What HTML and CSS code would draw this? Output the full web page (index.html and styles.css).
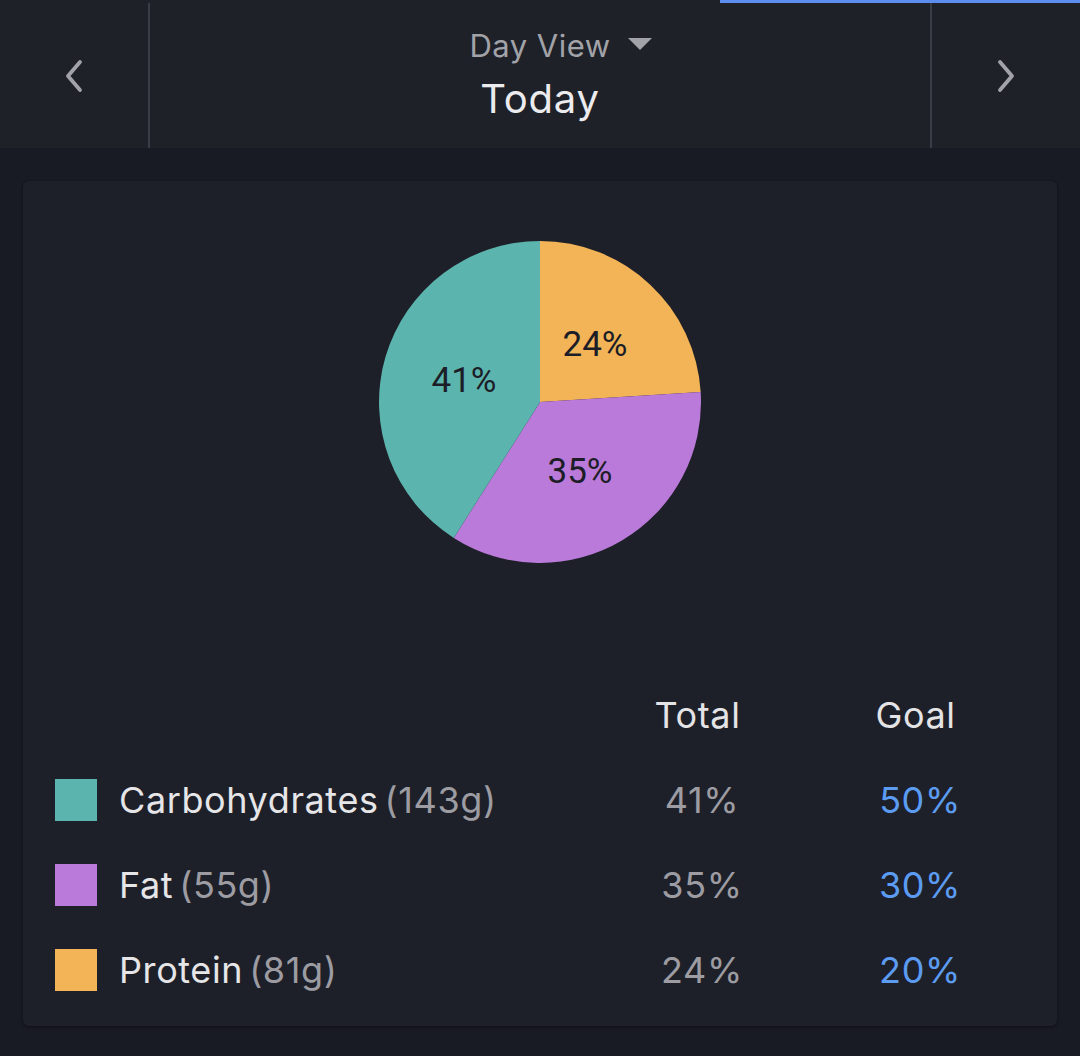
FILE: index.html
```html
<!DOCTYPE html>
<html lang="en">
<head>
    <meta charset="UTF-8">
    <meta name="viewport" content="width=device-width, initial-scale=1.0">
    <title>Macros - Day View</title>
    <link rel="stylesheet" href="styles.css">
</head>
<body>

    <header class="topbar">
        <div class="tab-strip">
            <div class="tab-indicator"></div>
        </div>
        <div class="date-nav">
            <button class="nav-btn" aria-label="Previous day">
                <svg width="22" height="34" viewBox="0 0 22 34">
                    <path d="M17 3 L5 17 L17 31" fill="none" stroke="#a2a3a8" stroke-width="3.8" stroke-linecap="round" stroke-linejoin="round"/>
                </svg>
            </button>
            <div class="date-title">
                <div class="view-select">
                    <span>Day View</span>
                    <svg class="caret" width="24" height="12" viewBox="0 0 24 12">
                        <path d="M0 0 H24 L12 12 Z" fill="#a2a3a8"/>
                    </svg>
                </div>
                <div class="day-label">Today</div>
            </div>
            <button class="nav-btn" aria-label="Next day">
                <svg width="22" height="34" viewBox="0 0 22 34">
                    <path d="M5 3 L17 17 L5 31" fill="none" stroke="#a2a3a8" stroke-width="3.8" stroke-linecap="round" stroke-linejoin="round"/>
                </svg>
            </button>
        </div>
    </header>

    <main class="card">
        <svg class="pie" width="322" height="322" viewBox="0 0 322 322">
            <path d="M161 161 L161 0 A161 161 0 0 1 321.68 150.89 Z" fill="#f2b457"/>
            <path d="M161 161 L321.68 150.89 A161 161 0 0 1 74.74 296.93 Z" fill="#ba7ad9"/>
            <path d="M161 161 L74.74 296.93 A161 161 0 0 1 161 0 Z" fill="#5bb4ae"/>
            <text x="216" y="103" class="pie-label">24%</text>
            <text x="85" y="139" class="pie-label">41%</text>
            <text x="201" y="230" class="pie-label">35%</text>
        </svg>

        <div class="macro-table">
            <div></div>
            <div class="col-head">Total</div>
            <div class="col-head">Goal</div>

            <div class="macro-name">
                <span class="swatch carbs"></span>
                <span>Carbohydrates<span class="grams">(143g)</span></span>
            </div>
            <div class="total">41%</div>
            <div class="goal">50%</div>

            <div class="macro-name">
                <span class="swatch fat"></span>
                <span>Fat<span class="grams">(55g)</span></span>
            </div>
            <div class="total">35%</div>
            <div class="goal">30%</div>

            <div class="macro-name">
                <span class="swatch protein"></span>
                <span>Protein<span class="grams">(81g)</span></span>
            </div>
            <div class="total">24%</div>
            <div class="goal">20%</div>
        </div>
    </main>

</body>
</html>
```

FILE: styles.css
```css
* {
    margin: 0;
    padding: 0;
    box-sizing: border-box;
}

body {
    width: 1080px;
    height: 1056px;
    overflow: hidden;
    background: #181a24;
    font-family: 'Inter', 'Roboto', sans-serif;
    color: #e6e6e8;
}

.topbar {
    background: #1f2129;
}

.tab-strip {
    height: 3px;
    display: flex;
}

.tab-indicator {
    margin-left: 720px;
    width: 360px;
    background: #5b8eef;
}

.date-nav {
    height: 145px;
    display: grid;
    grid-template-columns: 148px 1fr 148px;
}

.nav-btn {
    background: none;
    border: none;
    display: flex;
    align-items: center;
    justify-content: center;
    cursor: pointer;
}

.date-title {
    border-left: 2px solid #3a3c45;
    border-right: 2px solid #3a3c45;
    display: flex;
    flex-direction: column;
    align-items: center;
    padding-top: 24px;
}

.view-select {
    display: flex;
    align-items: center;
    gap: 17px;
    padding-left: 41px;
    font-size: 31px;
    letter-spacing: 0.5px;
    color: #a2a3a8;
    line-height: 38px;
}

.caret {
    margin-top: -4px;
}

.day-label {
    font-size: 40px;
    letter-spacing: 0.8px;
    line-height: 52px;
    margin-top: 8px;
    color: #ececee;
}

.card {
    margin: 33px 23px 0;
    padding: 60px 0 14px;
    background: #1e2029;
    border-radius: 6px;
    box-shadow: 0 1px 3px rgba(0, 0, 0, 0.45);
}

.pie {
    display: block;
    margin: 0 auto;
}

.pie-label {
    font-family: 'Roboto', sans-serif;
    font-size: 35px;
    fill: #1c1d26;
    text-anchor: middle;
    dominant-baseline: central;
}

.macro-table {
    margin-top: 109px;
    display: grid;
    grid-template-columns: 1fr 160px 160px;
    grid-auto-rows: 85px;
    column-gap: 58px;
    padding: 0 57px 0 32px;
    font-size: 36px;
    letter-spacing: 0.6px;
    align-items: center;
}

.col-head {
    text-align: center;
    color: #e4e4e6;
    margin-left: -9px;
}

.macro-name {
    display: flex;
    align-items: center;
    gap: 22px;
    color: #e6e6e8;
    white-space: nowrap;
}

.grams {
    margin-left: 6px;
    color: #9c9ca2;
}

.swatch {
    width: 42px;
    height: 42px;
    flex-shrink: 0;
}

.carbs {
    background: #5bb4ae;
}

.fat {
    background: #ba7ad9;
}

.protein {
    background: #f2b457;
}

.total {
    text-align: center;
    color: #9c9ca2;
}

.goal {
    text-align: center;
    color: #5b9cf2;
}
```
